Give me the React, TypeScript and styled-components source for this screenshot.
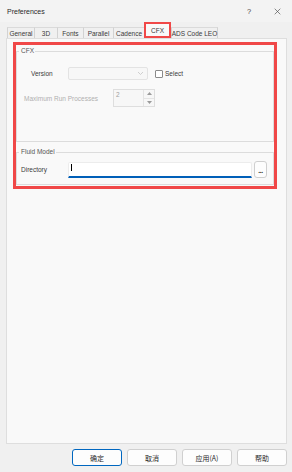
import * as React from 'react';
import styled, { createGlobalStyle } from 'styled-components';

const GlobalStyle = createGlobalStyle`
	html, body {
		margin: 0;
		padding: 0;
		background: #f0f0f0;
	}
	body {
		font-family: 'Liberation Sans', Arial, sans-serif;
	}
`;

const tabs = [
	{ label: 'General', width: 27 },
	{ label: '3D', width: 23 },
	{ label: 'Fonts', width: 26 },
	{ label: 'Parallel', width: 30 },
	{ label: 'Cadence', width: 31 },
	{ label: 'CFX', width: 27, active: true },
	{ label: 'ADS Code LEO', width: 47 },
];

const buttons = [
	{ label: '确定', primary: true },
	{ label: '取消' },
	{ label: '应用(A)' },
	{ label: '帮助' },
];

function App() {
	return (
		<>
			<GlobalStyle />
			<Window>
				<TitleBar>
					<Title>Preferences</Title>
					<TitleIcon>?</TitleIcon>
					<CloseIcon viewBox='0 0 10 10'>
						<path d='M1 1 L9 9 M9 1 L1 9' />
					</CloseIcon>
				</TitleBar>
				<Body>
					<TabBar>
						{tabs.map((t) => (
							<Tab key={t.label} $width={t.width} $active={!!t.active}>
								{t.label}
							</Tab>
						))}
					</TabBar>
					<Pane>
						<Highlight>
							<Group>
								<Legend>CFX</Legend>
								<Row $indent={14} $top={10}>
									<Label $width={37}>Version</Label>
									<Combo>
										<svg width='7' height='5' viewBox='0 0 7 5'>
											<path d='M1 1 L3.5 3.5 L6 1' fill='none' stroke='#c4c4c4' strokeWidth='0.8' />
										</svg>
									</Combo>
									<Check />
									<CheckText>Select</CheckText>
								</Row>
								<Row $indent={7} $top={9} $bottom={34}>
									<Label $width={89} $disabled>
										Maximum Run Processes
									</Label>
									<Spin>
										<SpinValue>2</SpinValue>
										<SpinButtons>
											<SpinArrow>
												<svg width='5' height='3' viewBox='0 0 5 3'>
													<path d='M0 3 L2.5 0 L5 3 Z' fill='#9a9a9a' />
												</svg>
											</SpinArrow>
											<SpinArrow>
												<svg width='5' height='3' viewBox='0 0 5 3'>
													<path d='M0 0 L2.5 3 L5 0 Z' fill='#9a9a9a' />
												</svg>
											</SpinArrow>
										</SpinButtons>
									</Spin>
								</Row>
							</Group>
							<Group $gap={4}>
								<Legend>Fluid Model</Legend>
								<Row $indent={4} $top={3} $bottom={6}>
									<Label $width={47}>Directory</Label>
									<TextInput>
										<Caret />
									</TextInput>
									<BrowseButton>...</BrowseButton>
								</Row>
							</Group>
						</Highlight>
					</Pane>
					<ButtonRow>
						{buttons.map((b) => (
							<DialogButton key={b.label} $primary={!!b.primary}>
								{b.label}
							</DialogButton>
						))}
					</ButtonRow>
				</Body>
			</Window>
		</>
	);
}

export default App;

const Window = styled.div`
	width: 292px;
	height: 472px;
	display: flex;
	flex-direction: column;
	background: #f0f0f0;
	color: #3a3a3a;
	font-size: 6.5px;
	overflow: hidden;
`;

const TitleBar = styled.div`
	height: 22px;
	padding-top: 1px;
	box-sizing: border-box;
	display: flex;
	align-items: center;
	padding-left: 7px;
	background: #f3f3f3;
`;

const Title = styled.div`
	flex: 1;
	font-size: 7px;
	color: #2a2a2a;
`;

const TitleIcon = styled.div`
	width: 8px;
	font-size: 7.5px;
	color: #444;
	margin-right: 19px;
`;

const CloseIcon = styled.svg`
	width: 7px;
	height: 7px;
	margin-right: 11px;
	fill: none;
	stroke: #444;
	stroke-width: 0.9;
`;

const Body = styled.div`
	flex: 1;
	display: flex;
	flex-direction: column;
	padding: 0 5px 0 6px;
	min-height: 0;
`;

const TabBar = styled.div`
	height: 16px;
	display: flex;
	align-items: flex-end;
	padding-left: 1px;
`;

const Tab = styled.div<{ $width: number; $active: boolean }>`
	width: ${(p) => p.$width}px;
	box-sizing: border-box;
	height: ${(p) => (p.$active ? 16 : 11)}px;
	display: flex;
	align-items: center;
	justify-content: center;
	white-space: nowrap;
	color: #3a3a3a;
	background: ${(p) => (p.$active ? '#f9f9f9' : '#f0f0f0')};
	border: ${(p) => (p.$active ? '2px solid #f04848' : 'none')};
	border-top: ${(p) => (p.$active ? '2px solid #f04848' : '1px solid #dadada')};
	border-left: ${(p) => (p.$active ? '2px solid #f04848' : '1px solid #d2d2d2')};
	padding-top: ${(p) => (p.$active ? 1 : 0)}px;

	&:last-child {
		border-right: 1px solid #d2d2d2;
	}
`;

const Pane = styled.div`
	flex: 1;
	background: #f9f9f9;
	border: 1px solid #dedede;
	padding: 3px 9px 0 6px;
`;

const Highlight = styled.div`
	border: 3px solid #f04848;
	padding-bottom: 1px;
`;

const Group = styled.fieldset<{ $gap?: number }>`
	margin: ${(p) => p.$gap || 0}px 0 0;
	padding: 0;
	border: 1px solid #dcdcdc;
	min-width: 0;
`;

const Legend = styled.legend`
	margin-left: 2px;
	padding: 0 1px 0 2px;
	line-height: 12px;
	color: #555;
`;

const Row = styled.div<{ $indent: number; $top: number; $bottom?: number }>`
	display: flex;
	align-items: center;
	padding-left: ${(p) => p.$indent}px;
	margin-top: ${(p) => p.$top}px;
	margin-bottom: ${(p) => p.$bottom || 0}px;
`;

const Label = styled.div<{ $width: number; $disabled?: boolean }>`
	width: ${(p) => p.$width}px;
	flex: none;
	white-space: nowrap;
	color: ${(p) => (p.$disabled ? '#b0b0b0' : '#3a3a3a')};
`;

const Combo = styled.div`
	width: 80px;
	height: 13px;
	box-sizing: border-box;
	border: 1px solid #e3e3e3;
	border-radius: 2px;
	background: #f7f7f7;
	display: flex;
	align-items: center;
	justify-content: flex-end;
	padding-right: 3px;
`;

const Check = styled.div`
	width: 8px;
	height: 8px;
	box-sizing: border-box;
	margin-left: 7px;
	border: 1px solid #8a8a8a;
	border-radius: 1px;
	background: #fff;
`;

const CheckText = styled.div`
	margin-left: 2px;
	color: #3a3a3a;
`;

const Spin = styled.div`
	width: 42px;
	height: 18px;
	box-sizing: border-box;
	border: 1px solid #dedede;
	background: #f7f7f7;
	display: flex;
	justify-content: space-between;
`;

const SpinValue = styled.div`
	padding: 1px 0 0 2px;
	color: #a0a0a0;
`;

const SpinButtons = styled.div`
	width: 10px;
	display: flex;
	flex-direction: column;
	border-left: 1px solid #e4e4e4;
`;

const SpinArrow = styled.div`
	flex: 1;
	display: flex;
	align-items: center;
	justify-content: center;
	border-bottom: 1px solid #e4e4e4;

	&:last-child {
		border-bottom: none;
	}
`;

const TextInput = styled.div`
	width: 184px;
	height: 16px;
	box-sizing: border-box;
	background: #fff;
	border: 1px solid #ececec;
	border-bottom: 2px solid #005fb8;
	border-radius: 2px 2px 0 0;
	padding: 1px 0 0 2px;
	align-self: flex-end;
`;

const Caret = styled.div`
	width: 1px;
	height: 7px;
	background: #000;
`;

const BrowseButton = styled.div`
	width: 13px;
	height: 17px;
	box-sizing: border-box;
	margin-left: 2px;
	border: 1px solid #cfcfcf;
	border-radius: 3px;
	background: #fdfdfd;
	display: flex;
	align-items: center;
	justify-content: center;
	padding-top: 1px;
	font-weight: bold;
	color: #1a1a1a;
	letter-spacing: -0.3px;
`;

const ButtonRow = styled.div`
	display: flex;
	justify-content: flex-end;
	gap: 5px;
	padding: 5px 0 6px;
`;

const DialogButton = styled.div<{ $primary: boolean }>`
	width: 50px;
	height: 17px;
	box-sizing: border-box;
	display: flex;
	align-items: center;
	justify-content: center;
	border: 1px solid ${(p) => (p.$primary ? '#0067c0' : '#d0d0d0')};
	border-radius: 3px;
	background: #fdfdfd;
	font-family: 'Noto Sans CJK SC', 'Liberation Sans', sans-serif;
	font-size: 7px;
	color: #2a2a2a;
`;
